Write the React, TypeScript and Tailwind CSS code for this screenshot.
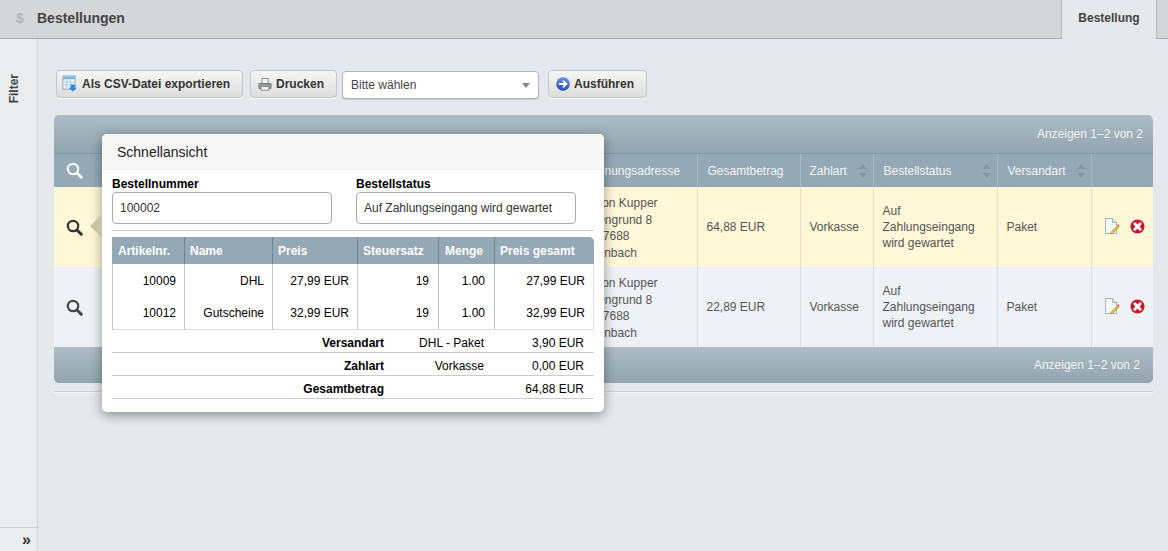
import React from "react";

const font = { fontFamily: '"Liberation Sans", Arial, sans-serif' };

const SearchIcon = ({ color }: { color: string }) => (
  <svg width="17" height="17" viewBox="0 0 17 17" fill="none">
    <circle cx="7" cy="7" r="5.2" stroke={color} strokeWidth="2.2" />
    <path d="M11 11 L15.3 15.3" stroke={color} strokeWidth="3" strokeLinecap="round" />
  </svg>
);

const SortArrows = () => (
  <span className="flex flex-col gap-[4px]">
    <span className="w-0 h-0 border-x-[4px] border-x-transparent border-b-[5px] border-b-[#8297a4]" />
    <span className="w-0 h-0 border-x-[4px] border-x-transparent border-t-[5px] border-t-[#8297a4]" />
  </span>
);

const CsvIcon = () => (
  <svg width="16" height="18" viewBox="0 0 17 19">
    <rect x="1" y="1" width="13" height="14" fill="#f2f7fb" stroke="#8aa4b8" />
    <rect x="1.5" y="1.5" width="12" height="3" fill="#7db4e0" />
    <path d="M2 7.5H13M2 10.5H13M5 5V14M9 5V14" stroke="#a9cbe0" />
    <path d="M9.5 10H13.5V13.5H16L11.5 17.5L7 13.5H9.5Z" fill="#2d86d6" />
  </svg>
);

const PrintIcon = () => (
  <svg width="14" height="13" viewBox="0 0 16 15">
    <rect x="4.5" y="0.5" width="7" height="6" fill="#f4f4f4" stroke="#8a8a8a" />
    <path d="M1 6.5H15V12H1Z" fill="#9a9ea0" stroke="#6d6f70" />
    <rect x="3.5" y="10" width="9" height="4" fill="#fff" stroke="#7d7d7d" />
    <rect x="11.5" y="7.5" width="2" height="1" fill="#63c04f" />
  </svg>
);

const GoIcon = () => (
  <svg width="14" height="14" viewBox="0 0 14 14">
    <defs>
      <linearGradient id="go" x1="0" y1="0" x2="0" y2="1">
        <stop offset="0" stopColor="#6f8fe0" />
        <stop offset="1" stopColor="#2a49b8" />
      </linearGradient>
    </defs>
    <circle cx="7" cy="7" r="6.8" fill="url(#go)" />
    <path d="M3 7H10M7 3.6L10.4 7L7 10.4" stroke="#fff" strokeWidth="1.8" fill="none" />
  </svg>
);

const EditIcon = () => (
  <svg width="16" height="17" viewBox="0 0 16 17">
    <path d="M1.5 0.5H8.5L12.5 4.5V15.5H1.5Z" fill="#f3f8f8" stroke="#a6b5b5" />
    <path d="M8.5 0.5V4.5H12.5" fill="#dfe8e8" stroke="#a6b5b5" />
    <path d="M7 14L13.5 7.5L15 9L8.5 15.5L6.5 16Z" fill="#e8b93c" stroke="#a8842a" strokeWidth="0.5" />
    <path d="M13.2 7.2L14.3 6.2L15.6 7.6L14.8 8.6Z" fill="#d9534f" />
  </svg>
);

const DeleteIcon = () => (
  <svg width="15" height="15" viewBox="0 0 15 15">
    <circle cx="7.5" cy="7.5" r="7" fill="#c9142c" />
    <path d="M4.8 4.8L10.2 10.2M10.2 4.8L4.8 10.2" stroke="#fff" strokeWidth="3" strokeLinecap="round" />
  </svg>
);

const ToolButton = ({ icon, label, className }: { icon: React.ReactNode; label: string; className: string }) => (
  <button className={`h-[28px] flex items-center gap-[4px] rounded-[4px] border border-[#c4c6c9] bg-gradient-to-b from-[#f6f6f6] to-[#dddddd] text-[12px] font-bold text-[#333] shadow-[0_1px_0_#fff] ${className}`}>
    {icon}
    {label}
  </button>
);

const HeadCell = ({ label, sort, className }: { label?: string; sort?: boolean; className?: string }) => (
  <th className={`border-r border-[#a9b9c4] pr-[6px] text-left font-normal ${className ?? "pl-[9px]"}`}>
    <div className="flex items-center justify-between">
      <span>{label}</span>
      {sort && <SortArrows />}
    </div>
  </th>
);

const orders = [
  { id: "a", bg: "bg-[#fef8d9]", line: "border-[#e6e0bd]", icon: "#333", total: "64,88 EUR" },
  { id: "b", bg: "bg-[#eef2f6]", line: "border-[#d6dadf]", icon: "#444", total: "22,89 EUR" },
];

const items = [
  { nr: "10009", name: "DHL", price: "27,99 EUR" },
  { nr: "10012", name: "Gutscheine", price: "32,99 EUR" },
];

const summary = [
  { label: "Versandart", value: "DHL - Paket", price: "3,90 EUR" },
  { label: "Zahlart", value: "Vorkasse", price: "0,00 EUR" },
  { label: "Gesamtbetrag", value: "", price: "64,88 EUR" },
];

const QuickView = () => (
  <div className="absolute left-[102px] top-[134px] w-[502px] h-[278px] rounded-[5px] bg-white shadow-[0_3px_12px_rgba(0,0,0,0.4)] text-[12px] text-black">
    <div className="absolute left-[-12px] top-[80px] w-0 h-0 border-y-[12px] border-y-transparent border-r-[12px] border-r-[#c8c2a8]" />
    <div className="h-[36px] rounded-t-[5px] bg-[#f7f7f7] border-b border-[#ececec] pl-[15px] pt-[2px] flex items-center text-[14px] text-[#222]">
      Schnellansicht
    </div>
    <div className="px-[10px]">
      <div className="flex gap-[24px] pt-[7px]">
        <div className="w-[220px]">
          <div className="font-bold leading-[15px]">Bestellnummer</div>
          <div className="h-[32px] rounded-[4px] border border-[#aaa] pl-[7px] flex items-center text-[#333]">100002</div>
        </div>
        <div className="w-[220px]">
          <div className="font-bold leading-[15px]">Bestellstatus</div>
          <div className="h-[32px] rounded-[4px] border border-[#aaa] pl-[7px] flex items-center text-[#333]">Auf Zahlungseingang wird gewartet</div>
        </div>
      </div>
      <div className="mt-[6px] w-[482px] border-t border-[#ccc]" />
      <table className="mt-[6px] w-[482px] table-fixed border-separate border-spacing-0">
        <colgroup>
          <col className="w-[73px]" />
          <col className="w-[88px]" />
          <col className="w-[85px]" />
          <col className="w-[81px]" />
          <col className="w-[56px]" />
          <col />
        </colgroup>
        <thead>
          <tr className="h-[27px] bg-[#95a8b5] text-white font-bold text-left">
            <th className="pl-[6px] border-r border-[#6f828f]">Artikelnr.</th>
            <th className="pl-[5px] border-r border-[#6f828f]">Name</th>
            <th className="pl-[5px] border-r border-[#6f828f]">Preis</th>
            <th className="pl-[5px] border-r border-[#6f828f]">Steuersatz</th>
            <th className="pl-[6px] border-r border-[#6f828f]">Menge</th>
            <th className="pl-[5px] rounded-tr-[5px]">Preis gesamt</th>
          </tr>
        </thead>
        <tbody>
          {items.map((item, i) => (
            <tr key={item.nr} className="h-[33px] text-right">
              <td className={`pr-[8px] border-l border-r border-[#c4c4c4] ${i === 1 ? "border-b border-b-[#ddd]" : ""}`}>{item.nr}</td>
              <td className={`pr-[8px] border-r border-[#c4c4c4] ${i === 1 ? "border-b border-b-[#ddd]" : ""}`}>{item.name}</td>
              <td className={`pr-[8px] border-r border-[#c4c4c4] ${i === 1 ? "border-b border-b-[#ddd]" : ""}`}>{item.price}</td>
              <td className={`pr-[9px] border-r border-[#c4c4c4] ${i === 1 ? "border-b border-b-[#ddd]" : ""}`}>19</td>
              <td className={`pr-[9px] border-r border-[#c4c4c4] ${i === 1 ? "border-b border-b-[#ddd]" : ""}`}>1.00</td>
              <td className={`pr-[8px] border-r border-[#ddd] ${i === 1 ? "border-b border-b-[#ddd]" : ""}`}>{item.price}</td>
            </tr>
          ))}
        </tbody>
      </table>
      <div className="w-[482px]">
        {summary.map((row) => (
          <div key={row.label} className="h-[23px] pt-[4px] border-b border-[#ccc] flex items-center text-right">
            <span className="w-[272px] font-bold">{row.label}</span>
            <span className="w-[100px]">{row.value}</span>
            <span className="w-[100px]">{row.price}</span>
          </div>
        ))}
      </div>
    </div>
  </div>
);

const App = () => {
  return (
    <div style={font} className="relative w-[1168px] h-[551px] overflow-hidden bg-[#e5e8ec] flex flex-col">
      <header className="h-[39px] shrink-0 flex bg-[#d5d6d8] border-b border-[#aeadb2]">
        <div className="flex-1 flex items-center pl-[16px] pb-[1px]">
          <span className="w-[21px] text-[14px] font-bold text-[#b4b6b8]">$</span>
          <span className="text-[14px] font-bold text-[#444]">Bestellungen</span>
        </div>
        <div className="w-[96px] h-[39px] bg-[#e5e8ec] border-x border-[#b9b9bd] flex items-center justify-center pb-[3px] text-[12px] font-bold text-[#444]">
          Bestellung
        </div>
        <div className="w-[11px]" />
      </header>

      <div className="flex-1 flex min-h-0">
        <aside className="w-[38px] shrink-0 border-r border-[#cdd0d4] bg-[#e9edf0] flex flex-col">
          <div className="flex-1 pt-[35px] pr-[9px] flex justify-center items-start">
            <span className="[writing-mode:vertical-rl] rotate-180 text-[12px] font-bold text-[#444]">Filter</span>
          </div>
          <div className="h-[24px] border-t border-[#cdd0d4] flex items-center justify-end pr-[6px] text-[16px] font-bold text-[#333]">»</div>
        </aside>

        <main className="flex-1 pl-[16px] pr-[15px] text-[12px]">
          <div className="flex items-start mt-[31px] ml-[2px]">
            <ToolButton icon={<CsvIcon />} label="Als CSV-Datei exportieren" className="w-[187px] pl-[5px]" />
            <ToolButton icon={<PrintIcon />} label="Drucken" className="w-[87px] ml-[7px] pl-[7px]" />
            <div className="ml-[5px] mt-[1px] w-[197px] h-[28px] rounded-[4px] border border-[#b5b5b5] bg-white shadow-[0_1px_1px_rgba(0,0,0,0.15)] pl-[8px] pr-[8px] flex items-center justify-between text-[#444]">
              <span>Bitte wählen</span>
              <span className="w-0 h-0 border-x-[4px] border-x-transparent border-t-[5px] border-t-[#888]" />
            </div>
            <ToolButton icon={<GoIcon />} label="Ausführen" className="w-[99px] ml-[9px] pl-[7px]" />
          </div>

          <section className="mt-[16px] w-[1099px]">
            <div className="h-[39px] rounded-t-[5px] bg-gradient-to-b from-[#adbcc4] to-[#93a5b1] border-b border-[#8598a4] flex items-center justify-end pr-[10px] text-[#f0f3f5]">
              Anzeigen 1–2 von 2
            </div>
            <table className="w-full table-fixed border-collapse text-[12px] text-[#555]">
              <colgroup>
                <col className="w-[40px]" />
                <col className="w-[473px]" />
                <col className="w-[130px]" />
                <col className="w-[103px]" />
                <col className="w-[73px]" />
                <col className="w-[124px]" />
                <col className="w-[94px]" />
                <col />
              </colgroup>
              <thead>
                <tr className="h-[33px] bg-[#95a8b5] text-[#f2f5f7]">
                  <th className="pl-[12px]"><SearchIcon color="#f2f5f7" /></th>
                  <HeadCell />
                  <HeadCell label="Rechnungsadresse" />
                  <HeadCell label="Gesamtbetrag" className="pl-[10px]" />
                  <HeadCell label="Zahlart" sort />
                  <HeadCell label="Bestellstatus" sort className="pl-[10px]" />
                  <HeadCell label="Versandart" sort className="pl-[10px]" />
                  <th />
                </tr>
              </thead>
              <tbody>
                {orders.map((order) => (
                  <tr key={order.id} className={`h-[80px] ${order.bg}`}>
                    <td className="pl-[12px]"><SearchIcon color={order.icon} /></td>
                    <td className={`border-r ${order.line}`} />
                    <td className={`border-r ${order.line} pl-[8px] pt-[2px] leading-[16.5px]`}>
                      Gordon Kupper<br />Lindengrund 8<br />DE-47688<br />Rodenbach
                    </td>
                    <td className={`border-r ${order.line} pl-[9px]`}>{order.total}</td>
                    <td className={`border-r ${order.line} pl-[9px]`}>Vorkasse</td>
                    <td className={`border-r ${order.line} pl-[9px] leading-[16px]`}>
                      Auf<br />Zahlungseingang<br />wird gewartet
                    </td>
                    <td className={`border-r ${order.line} pl-[9px]`}>Paket</td>
                    <td>
                      <div className="flex items-center pl-[12px] gap-[10px] -mt-[2px]">
                        <EditIcon />
                        <DeleteIcon />
                      </div>
                    </td>
                  </tr>
                ))}
              </tbody>
            </table>
            <div className="h-[36px] rounded-b-[5px] bg-gradient-to-b from-[#adbcc4] to-[#93a5b1] flex items-center justify-end pr-[13px] text-[#f0f3f5]">
              Anzeigen 1–2 von 2
            </div>
            <div className="mt-[8px] border-t border-[#cfd1d3] shadow-[0_1px_0_#f4f5f7]" />
          </section>
        </main>
      </div>

      <QuickView />
    </div>
  );
};

export default App;
